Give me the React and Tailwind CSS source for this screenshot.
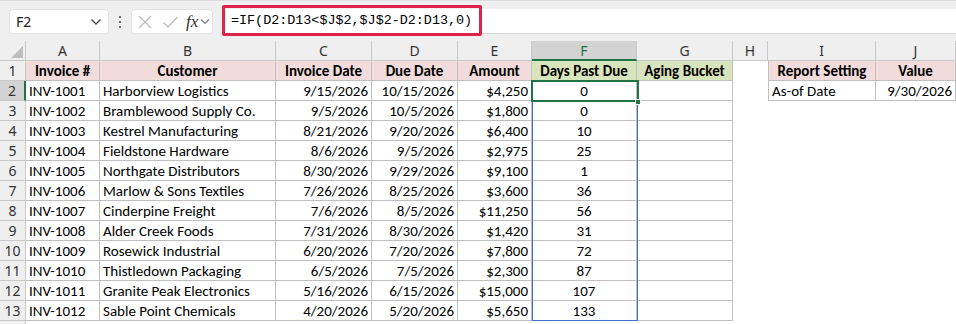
import React from "react";

const rows = [
  ["INV-1001", "Harborview Logistics", "9/15/2026", "10/15/2026", "$4,250", "0"],
  ["INV-1002", "Bramblewood Supply Co.", "9/5/2026", "10/5/2026", "$1,800", "0"],
  ["INV-1003", "Kestrel Manufacturing", "8/21/2026", "9/20/2026", "$6,400", "10"],
  ["INV-1004", "Fieldstone Hardware", "8/6/2026", "9/5/2026", "$2,975", "25"],
  ["INV-1005", "Northgate Distributors", "8/30/2026", "9/29/2026", "$9,100", "1"],
  ["INV-1006", "Marlow & Sons Textiles", "7/26/2026", "8/25/2026", "$3,600", "36"],
  ["INV-1007", "Cinderpine Freight", "7/6/2026", "8/5/2026", "$11,250", "56"],
  ["INV-1008", "Alder Creek Foods", "7/31/2026", "8/30/2026", "$1,420", "31"],
  ["INV-1009", "Rosewick Industrial", "6/20/2026", "7/20/2026", "$7,800", "72"],
  ["INV-1010", "Thistledown Packaging", "6/5/2026", "7/5/2026", "$2,300", "87"],
  ["INV-1011", "Granite Peak Electronics", "5/16/2026", "6/15/2026", "$15,000", "107"],
  ["INV-1012", "Sable Point Chemicals", "4/20/2026", "5/20/2026", "$5,650", "133"],
];

const cols = [
  { l: "A", w: "w-[74px]" },
  { l: "B", w: "w-[176px]" },
  { l: "C", w: "w-[96px]" },
  { l: "D", w: "w-[86px]" },
  { l: "E", w: "w-[74px]" },
  { l: "F", w: "w-[105px]" },
  { l: "G", w: "w-[96px]" },
  { l: "H", w: "w-[35px]" },
  { l: "I", w: "w-[108px]" },
  { l: "J", w: "w-[80px]" },
];

const cellB = "border-r border-b border-[#bfbfbf] pt-[2px]";
const uiFont = "font-['Segoe_UI','Noto_Sans',sans-serif]";

function Chevron() {
  return (
    <svg width="12" height="8" viewBox="0 0 12 8" fill="none">
      <path d="M1.5 1.5 L6 6 L10.5 1.5" stroke="#444" strokeWidth="1.3" />
    </svg>
  );
}

export default function App() {
  return (
    <div className="w-[956px] h-[324px] overflow-hidden bg-white relative text-black font-['Carlito','Liberation_Sans',sans-serif]">
      {/* Formula bar */}
      <div className="h-[41px] bg-[#efefef] border-t border-[#dcdcdc] flex items-start pt-[8px] relative">
        <div className="ml-[9px] w-[100px] h-[25px] bg-white rounded-[4px] border border-[#e3e3e3] flex items-center justify-between pl-[6px] pr-[6px]">
          <span className={`text-[14px] text-[#222] ${uiFont}`}>F2</span>
          <Chevron />
        </div>
        <div className="w-[22px] h-[25px] flex flex-col items-center justify-center gap-[3px]">
          <span className="w-[2px] h-[2px] bg-[#444] rounded-full" />
          <span className="w-[2px] h-[2px] bg-[#444] rounded-full" />
          <span className="w-[2px] h-[2px] bg-[#444] rounded-full" />
        </div>
        <div className="w-[82px] h-[25px] bg-white rounded-[4px] border border-[#e3e3e3] flex items-center pl-[5px]">
          <svg width="16" height="16" viewBox="0 0 16 16">
            <path d="M2 2 L14 14 M14 2 L2 14" stroke="#b8b8b8" strokeWidth="1.2" />
          </svg>
          <svg className="ml-[9px]" width="17" height="16" viewBox="0 0 17 16">
            <path d="M1.5 8.5 L6 13 L15.5 3" stroke="#b8b8b8" strokeWidth="1.2" fill="none" />
          </svg>
          <span className="ml-[7px] text-[17px] italic text-[#333] leading-none font-['Liberation_Serif','DejaVu_Serif',serif]">
            fx
          </span>
          <svg className="ml-[2px]" width="10" height="7" viewBox="0 0 10 7" fill="none">
            <path d="M1 1.5 L5 5.5 L9 1.5" stroke="#777" strokeWidth="1.1" />
          </svg>
        </div>
        <div className="ml-[9px] flex-1 h-[25px] bg-white border-b border-[#d6d6d6] flex items-center pl-[9px]">
          <span className="text-[13.4px] text-[#000] font-['Liberation_Mono','DejaVu_Sans_Mono',monospace]">
            =IF(D2:D13&lt;$J$2,$J$2-D2:D13,0)
          </span>
        </div>
        <div className="absolute left-[222px] top-[4px] w-[260px] h-[31px] border-[3px] border-[#e0234e] rounded-[2px]" />
      </div>

      {/* Column headers */}
      <div className="flex h-[20px] bg-[#efefef]">
        <div className="w-[26px] h-[20px] border-r border-b border-[#c8c8c8] relative">
          <svg className="absolute right-[2px] bottom-[2px]" width="12" height="12" viewBox="0 0 12 12">
            <path d="M12 0 L12 12 L0 12 Z" fill="#bdbdbd" />
          </svg>
        </div>
        {cols.map((c) =>
          c.l === "F" ? (
            <div
              key={c.l}
              className={`${c.w} h-[20px] bg-[#d3d3d3] border-r border-[#c8c8c8] border-b-2 border-b-[#217346] flex items-center justify-center text-[14px] text-[#217346] ${uiFont}`}
            >
              {c.l}
            </div>
          ) : (
            <div
              key={c.l}
              className={`${c.w} h-[20px] border-r border-b border-[#c8c8c8] flex items-center justify-center text-[14px] text-[#333] ${uiFont}`}
            >
              {c.l}
            </div>
          )
        )}
      </div>

      {/* Row 1 */}
      <div className="flex h-[20px] text-[15px] font-bold">
        <div className={`w-[26px] h-[20px] bg-[#efefef] border-r border-b border-[#c8c8c8] flex items-center justify-center text-[14px] font-normal text-[#333] ${uiFont}`}>
          1
        </div>
        {[
          ["Invoice #", "w-[74px]", "bg-[#f2dcdb]"],
          ["Customer", "w-[176px]", "bg-[#f2dcdb]"],
          ["Invoice Date", "w-[96px]", "bg-[#f2dcdb]"],
          ["Due Date", "w-[86px]", "bg-[#f2dcdb]"],
          ["Amount", "w-[74px]", "bg-[#f2dcdb]"],
          ["Days Past Due", "w-[105px]", "bg-[#d8e4bc]"],
          ["Aging Bucket", "w-[96px]", "bg-[#d8e4bc]"],
        ].map(([t, w, bg]) => (
          <div key={t} className={`${w} h-[20px] ${bg} ${cellB} flex items-center justify-center whitespace-nowrap`}>
            {t}
          </div>
        ))}
        <div className="w-[35px] h-[20px]" />
        <div className={`w-[108px] h-[20px] bg-[#f2dcdb] ${cellB} border-l flex items-center justify-center`}>Report Setting</div>
        <div className={`w-[80px] h-[20px] bg-[#f2dcdb] ${cellB} flex items-center justify-center`}>Value</div>
      </div>

      {/* Data rows */}
      {rows.map((r, i) => (
        <div key={r[0]} className="flex h-[20px] text-[15px]">
          <div
            className={`w-[26px] h-[20px] border-b border-[#c8c8c8] flex items-center justify-center text-[14px] text-[#333] ${uiFont} ${
              i === 0 ? "bg-[#d3d3d3] border-r-2 border-r-[#217346]" : "bg-[#efefef] border-r"
            }`}
          >
            {i + 2}
          </div>
          <div className={`w-[74px] h-[20px] ${cellB} flex items-center pl-[3px] whitespace-nowrap`}>{r[0]}</div>
          <div className={`w-[176px] h-[20px] ${cellB} flex items-center pl-[3px] whitespace-nowrap`}>{r[1]}</div>
          <div className={`w-[96px] h-[20px] ${cellB} flex items-center justify-end pr-[3px]`}>{r[2]}</div>
          <div className={`w-[86px] h-[20px] ${cellB} flex items-center justify-end pr-[3px]`}>{r[3]}</div>
          <div className={`w-[74px] h-[20px] ${cellB} flex items-center justify-end pr-[3px]`}>{r[4]}</div>
          <div className={`w-[105px] h-[20px] ${cellB} flex items-center justify-center`}>{r[5]}</div>
          <div className={`w-[96px] h-[20px] ${cellB}`} />
          <div className="w-[35px] h-[20px]" />
          {i === 0 ? (
            <>
              <div className={`w-[108px] h-[20px] ${cellB} border-l flex items-center pl-[3px]`}>As-of Date</div>
              <div className={`w-[80px] h-[20px] ${cellB} flex items-center justify-end pr-[3px]`}>9/30/2026</div>
            </>
          ) : null}
        </div>
      ))}
      <div className="flex h-[20px]">
        <div className="w-[26px] h-[20px] bg-[#efefef] border-r border-[#c8c8c8]" />
      </div>

      {/* Spill range outline */}
      <div className="absolute left-[532px] top-[80px] w-[106px] h-[241px] border border-[#3a6fd0] pointer-events-none" />
      {/* Active cell */}
      <div className="absolute left-[531px] top-[80px] w-[108px] h-[22px] border-2 border-[#217346] pointer-events-none" />
      <div className="absolute left-[635px] top-[99px] w-[6px] h-[6px] bg-[#217346] border border-white pointer-events-none" />
    </div>
  );
}
